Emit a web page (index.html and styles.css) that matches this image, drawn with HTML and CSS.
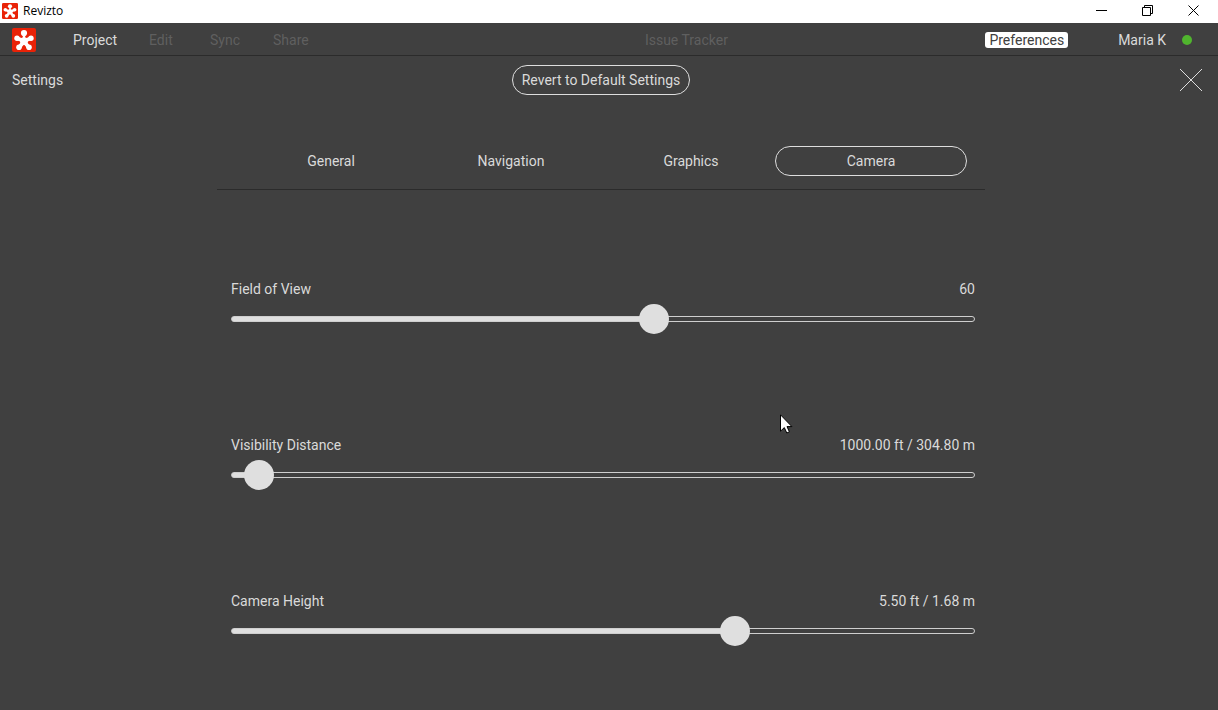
FILE: index.html
```html
<!DOCTYPE html>
<html lang="en">
<head>
<meta charset="utf-8">
<meta name="viewport" content="width=device-width, initial-scale=1">
<title>Revizto</title>
<link rel="stylesheet" href="styles.css">
</head>
<body>
<svg class="defs" aria-hidden="true">
  <symbol id="logo" viewBox="0 0 24 24">
    <rect width="24" height="24" rx="2" fill="#e92207"/>
    <g stroke="#fff" fill="none">
      <path stroke-width="2.4" d="M12 5v8"/>
      <path stroke-width="3.8" d="M5 10.300l7 2.700 7-2.700M7.200 19.200l4.800-5.700 4.800 5.700"/>
    </g>
    <g fill="#fff">
      <circle cx="12" cy="13.200" r="3.900"/>
      <circle cx="12" cy="5" r="3.100"/>
      <circle cx="5" cy="10.200" r="2.700"/>
      <circle cx="19" cy="10.200" r="2.700"/>
      <circle cx="7" cy="19.300" r="2.800"/>
      <circle cx="17" cy="19.300" r="2.800"/>
    </g>
  </symbol>
</svg>
<div class="window">
  <header class="titlebar">
    <svg class="titlebar-icon" aria-hidden="true"><use href="#logo"/></svg>
    <span class="titlebar-name">Revizto</span>
    <div class="window-controls">
      <button class="window-button" aria-label="Minimize"><svg width="11" height="11" viewBox="0 0 11 11"><path d="M0 5.500h11"/></svg></button>
      <button class="window-button" aria-label="Restore"><svg width="11" height="11" viewBox="0 0 11 11"><path d="M.5 2.500h8v8h-8zM2.500 2.500v-2h8v8h-2"/></svg></button>
      <button class="window-button" aria-label="Close"><svg width="11" height="11" viewBox="0 0 11 11"><path d="M.5.5l10 10M10.500.5l-10 10"/></svg></button>
    </div>
  </header>

  <div class="menubar">
    <div class="menubar-start">
      <svg class="menubar-logo" aria-hidden="true"><use href="#logo"/></svg>
      <nav class="menu">
        <button class="menu-item">Project</button>
        <button class="menu-item" disabled>Edit</button>
        <button class="menu-item" disabled>Sync</button>
        <button class="menu-item" disabled>Share</button>
      </nav>
    </div>
    <button class="menu-item" disabled>Issue Tracker</button>
    <div class="menubar-end">
      <button class="menu-item menu-item-active">Preferences</button>
      <button class="menu-item account">Maria K<span class="status"></span></button>
    </div>
  </div>

  <main class="page">
    <div class="page-head">
      <h1 class="page-title">Settings</h1>
      <button class="pill revert">Revert to Default Settings</button>
      <button class="close" aria-label="Close settings"><svg width="24" height="24" viewBox="0 0 24 24"><path d="M1 1l22 22M23 1L1 23"/></svg></button>
    </div>

    <div class="page-body">
      <section class="panel">
        <div class="tabs" role="tablist">
          <button class="pill tab" role="tab" aria-selected="false">General</button>
          <button class="pill tab" role="tab" aria-selected="false">Navigation</button>
          <button class="pill tab" role="tab" aria-selected="false">Graphics</button>
          <button class="pill tab" role="tab" aria-selected="true">Camera</button>
        </div>
        <div class="fields">
          <div class="field">
            <label for="fov">Field of View</label>
            <output for="fov">60</output>
            <input class="slider" id="fov" type="range" min="20" max="90" value="60" style="--fill:57%">
          </div>
          <div class="field">
            <label for="distance">Visibility Distance</label>
            <output for="distance">1000.00 ft / 304.80 m</output>
            <input class="slider" id="distance" type="range" min="0" max="1000" value="17" style="--fill:4%">
          </div>
          <div class="field">
            <label for="height">Camera Height</label>
            <output for="height">5.50 ft / 1.68 m</output>
            <input class="slider" id="height" type="range" min="0" max="1000" value="685" style="--fill:68%">
          </div>
        </div>
      </section>
    </div>
  </main>
  <svg class="cursor" width="14" height="20" viewBox="0 0 14 20" aria-hidden="true"><path d="M.5.8v16.400l3.800-3.600 2.500 5.400 2.600-1.200-2.400-5.200h4.900z"/></svg>
</div>
</body>
</html>
```

FILE: styles.css
```css
* {
  box-sizing: border-box;
}

body {
  margin: 0;
  background: #404040;
  color: #dadada;
  font: 14px/20px Roboto, "Liberation Sans", sans-serif;
}

button {
  margin: 0;
  padding: 0;
  border: 0;
  background: none;
  color: inherit;
  font: inherit;
  white-space: nowrap;
}

svg {
  display: block;
}

.defs {
  position: absolute;
  width: 0;
  height: 0;
}

.window {
  position: relative;
  min-height: 100vh;
}

.titlebar {
  display: flex;
  align-items: center;
  height: 23px;
  padding: 0 2px 1px;
  background: #fff;
  color: #000;
  font: 12px/16px "Open Sans", "Noto Sans", sans-serif;
}

.titlebar-icon {
  width: 16px;
  height: 16px;
}

.titlebar-name {
  margin-left: 5px;
}

.window-controls {
  display: flex;
  align-self: stretch;
  margin-left: auto;
}

.window-button {
  display: flex;
  justify-content: center;
  width: 46px;
  padding-top: 5px;
}

.window-button path {
  fill: none;
  stroke: #000;
}

.menubar {
  display: flex;
  align-items: center;
  height: 33px;
  padding: 2px 26px 0 12px;
  border-bottom: 1px solid #2b2b2b;
}

.menubar-start {
  display: flex;
  flex: 15 1 0;
  align-items: center;
}

.menubar-logo {
  width: 24px;
  height: 24px;
}

.menu {
  display: grid;
  grid-template-columns: 76px 61px 63px auto;
  justify-items: start;
  margin-left: 37px;
}

.menu-item:disabled {
  color: #5f5f5f;
}

.menubar-end {
  display: flex;
  flex: 11 1 0;
  align-items: center;
  justify-content: flex-end;
  gap: 50px;
}

.menu-item-active {
  padding: 0 4px;
  border-radius: 3px;
  background: #fff;
  color: #404040;
  line-height: 16px;
}

.account {
  display: flex;
  align-items: center;
  gap: 16px;
}

.status {
  width: 10px;
  height: 10px;
  border-radius: 50%;
  background: #50b52e;
}

.page {
  padding: 9px 15px 24px 12px;
}

.page-head {
  display: grid;
  grid-template-columns: 1fr auto 1fr 13px;
  align-items: center;
}

.page-title {
  margin: 0;
  font-size: 14px;
  font-weight: 400;
  line-height: 20px;
}

.pill {
  height: 30px;
  border: 1px solid #dedede;
  border-radius: 15px;
}

.revert {
  padding: 0 9px;
}

.close {
  grid-column: 3 / 5;
  justify-self: end;
}

.close path {
  fill: none;
  stroke: #dedede;
}

.page-body {
  padding: 51px 13px 0 0;
}

.panel {
  max-width: 768px;
  margin: 0 auto;
}

.tabs {
  display: grid;
  grid-template-columns: repeat(4, 1fr);
  padding: 0 24px 13px;
  border-bottom: 1px solid #2b2b2b;
}

.tab {
  margin: 0 -6px;
}

.tab[aria-selected="false"] {
  border-color: transparent;
}

.fields {
  display: grid;
  gap: 101px;
  padding: 89px 10px 0 14px;
}

.field {
  display: grid;
  grid-template-columns: 1fr auto;
  row-gap: 5px;
}

.slider {
  grid-column: 1 / -1;
  width: 100%;
  height: 30px;
  margin: 0;
  background: none;
  appearance: none;
}

.slider::-webkit-slider-runnable-track {
  height: 6px;
  border: 1px solid #cfcfcf;
  border-radius: 3px;
  background: linear-gradient(#dfdfdf, #dfdfdf) 0 0 / var(--fill) 100% no-repeat border-box;
}

.slider::-webkit-slider-thumb {
  width: 30px;
  height: 30px;
  margin-top: -13px;
  border-radius: 50%;
  background: #dfdfdf;
  appearance: none;
}

.cursor {
  position: absolute;
  top: 414px;
  left: 780px;
  fill: #fff;
  stroke: #000;
}
```
